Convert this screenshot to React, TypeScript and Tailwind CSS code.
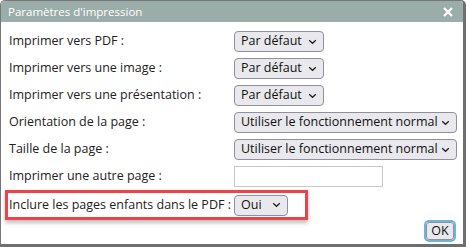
import React from 'react';

const font = { fontFamily: '"Open Sans", "Noto Sans", sans-serif' };

const Chevron = () => (
  <svg width="9" height="6" viewBox="0 0 9 6" className="shrink-0">
    <path d="M1.2 1.2 L4.5 4.3 L7.8 1.2" fill="none" stroke="#222" strokeWidth="1.3" />
  </svg>
);

const Select: React.FC<{ value: string; width: string }> = ({ value, width }) => (
  <div
    className={`flex h-[21px] items-center justify-between rounded-[4px] border border-[#8f8f9d] bg-[#e9e9ed] pl-[6px] pr-[6px] text-[12.5px] text-[#111] ${width}`}
  >
    <span className="whitespace-nowrap">{value}</span>
    <Chevron />
  </div>
);

const Row: React.FC<{ label: string; children: React.ReactNode }> = ({ label, children }) => (
  <div className="flex h-[27px] items-center">
    <div className="w-[225px] shrink-0 whitespace-nowrap text-[12.5px] text-[#222]">{label}</div>
    {children}
  </div>
);

export default function App() {
  return (
    <div className="h-[247px] w-[466px] bg-white" style={font}>
      <div className="flex h-[247px] w-[466px] flex-col overflow-hidden rounded-t-[5px] border-l border-t border-[#777] border-r-[3px] border-b-[3px] border-r-[#6f6f6f] border-b-[#6f6f6f]">
        {/* Title bar */}
        <div className="flex h-[21px] shrink-0 items-center justify-between bg-[#9bada8] pl-[7px] pr-[10px]">
          <span className="text-[11.5px] leading-none text-white">Paramètres d'impression</span>
          <svg width="10" height="10" viewBox="0 0 10 10">
            <path d="M1 1 L9 9 M9 1 L1 9" stroke="white" strokeWidth="2.2" />
          </svg>
        </div>

        {/* Body */}
        <div className="flex flex-1 flex-col pl-[8px] pt-[6px]">
          <Row label="Imprimer vers PDF :">
            <Select value="Par défaut" width="w-[90px]" />
          </Row>
          <Row label="Imprimer vers une image :">
            <Select value="Par défaut" width="w-[90px]" />
          </Row>
          <Row label="Imprimer vers une présentation :">
            <Select value="Par défaut" width="w-[90px]" />
          </Row>
          <Row label="Orientation de la page :">
            <Select value="Utiliser le fonctionnement normal" width="w-[223px]" />
          </Row>
          <Row label="Taille de la page :">
            <Select value="Utiliser le fonctionnement normal" width="w-[223px]" />
          </Row>
          <Row label="Imprimer une autre page :">
            <div className="h-[21px] w-[149px] border border-[#c8c8c8] bg-white" />
          </Row>
          <div className="-ml-[4px] flex h-[30px] w-[303px] items-center border-[3px] border-[#f04146] pl-[1px] shadow-[0_3px_4px_rgba(0,0,0,0.25)]">
            <div className="w-[225px] shrink-0 whitespace-nowrap text-[12.5px] text-[#222]">
              Inclure les pages enfants dans le PDF :
            </div>
            <Select value="Oui" width="w-[54px]" />
          </div>
          <div className="flex flex-1 items-end justify-end pb-[4px] pr-[7px]">
            <div className="rounded-[5px] border-2 border-[#6cb4d9]">
              <div className="flex h-[18px] w-[28px] items-center justify-center rounded-[3px] border border-[#8f8f9d] bg-[#e9e9ed] text-[12.5px] text-[#111]">
                OK
              </div>
            </div>
          </div>
        </div>
      </div>
    </div>
  );
}
